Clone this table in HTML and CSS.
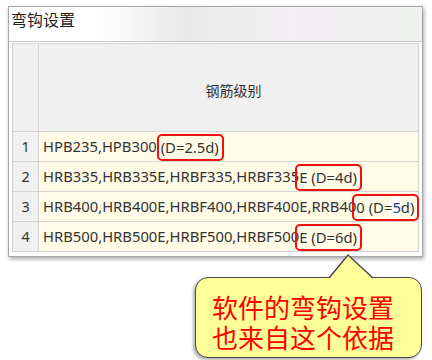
FILE: index.html
```html
<!DOCTYPE html>
<html>
<head>
<meta charset="utf-8">
<link rel="stylesheet" href="styles.css">
</head>
<body>
<div class="window">
  <div class="titlebar">弯钩设置</div>
  <div class="body">
    <div class="grid">
      <div class="num head"></div>
      <div class="cell head center">钢筋级别</div>

      <div class="num">1</div>
      <div class="cell">HPB235,HPB300 <span class="mark">(D=2.5d)</span></div>

      <div class="num">2</div>
      <div class="cell">HRB335,HRB335E,HRBF335,HRBF335<span class="mark">E (D=4d)</span></div>

      <div class="num">3</div>
      <div class="cell">HRB400,HRB400E,HRBF400,HRBF400E,RRB40<span class="mark">0 (D=<span class="sel">5</span>d)</span></div>

      <div class="num">4</div>
      <div class="cell">HRB500,HRB500E,HRBF500,HRBF500<span class="mark">E (D=6d)</span></div>
    </div>
  </div>
</div>

<div class="callout">
  <svg class="pointer" width="60" height="30" viewBox="0 0 60 30">
    <polygon points="8,27 27,3 52,27 52,30 8,30" fill="#ffff99"/>
    <polyline points="8,26 27,3 52,26" fill="none" stroke="#4a4a4a" stroke-width="1.5"/>
  </svg>
  <div class="callout-text">
    <div class="line">软件的弯钩设置</div>
    <div class="line">也来自这个依据</div>
  </div>
</div>
</body>
</html>
```
FILE: styles.css
```css
html, body {
  margin: 0;
  padding: 0;
  background: #ffffff;
}
body {
  width: 432px;
  height: 360px;
  position: relative;
  overflow: hidden;
  padding-top: 7px;
  box-sizing: border-box;
}
.window {
  margin-left: 9px;
  width: 413px;
  height: 249px;
  background: #ffffff;
  box-shadow: 0 0 0 1px #a8a8a8, 1px 2px 4px 1px rgba(0,0,0,0.35);
  box-sizing: border-box;
  display: flex;
  flex-direction: column;
}
.titlebar {
  height: 35px;
  box-sizing: border-box;
  border-bottom: 1px solid #c8c8c8;
  background: linear-gradient(to right, #ffffff 0%, #ffffff 22%, #e9e9e9 42%, #eeeeee 55%, #f3eff3 68%, #eef1ee 100%);
  font-family: "Noto Sans CJK SC", sans-serif;
  font-size: 16px;
  line-height: 20px;
  color: #222;
  padding: 2px 0 0 2px;
}
.body {
  padding: 1px 3px 4px 3px;
  flex: 1;
}
.grid {
  display: grid;
  grid-template-columns: 26px 1fr;
  grid-template-rows: 88px repeat(4, 30px);
  border-left: 1px solid #cfcfcf;
  border-top: 1px solid #d6d6d6;
  width: 407px;
  box-sizing: border-box;
}
.num, .cell {
  border-right: 1px solid #d4d4d4;
  border-bottom: 1px solid #d4d4d4;
  box-sizing: border-box;
  font-family: "Noto Sans", sans-serif;
  font-size: 14.8px;
  line-height: 29px;
  color: #333;
  white-space: nowrap;
}
.num {
  background: #f0f0f0;
  text-align: center;
  padding-top: 1px;
  line-height: 28px;
  font-size: 14.4px;
}
.cell {
  background: #fffbe6;
  padding-left: 4px;
}
.head {
  background: #f0f0f0;
}
.cell.center {
  display: flex;
  align-items: center;
  justify-content: center;
  font-family: "Noto Sans CJK SC", sans-serif;
  font-size: 14px;
  line-height: 20px;
  padding: 4px 0 0 10px;
}
.mark {
  display: inline-block;
  border: 2px solid #ee1111;
  border-radius: 5px;
  padding: 2px 3px 2px 2px;
  margin: 0 -5px 0 -4px;
  line-height: 19px;
  vertical-align: middle;
  position: relative;
  top: -1px;
}
.sel {
  background: #ffffff;
  color: #1a3a8a;
}
.callout {
  position: absolute;
  left: 195px;
  top: 277px;
  width: 227px;
  height: 81px;
  box-sizing: border-box;
  background: #ffff99;
  border: 1.5px solid #4a4a4a;
  border-radius: 13px;
  box-shadow: -2px 2px 3px rgba(0,0,0,0.3);
}
.pointer {
  position: absolute;
  left: 125px;
  top: -26px;
}
.callout-text {
  font-family: "Noto Sans CJK SC", sans-serif;
  font-size: 26px;
  color: #ff0000;
  padding: 14px 0 0 16px;
}
.line {
  height: 30px;
  line-height: 30px;
}
```
